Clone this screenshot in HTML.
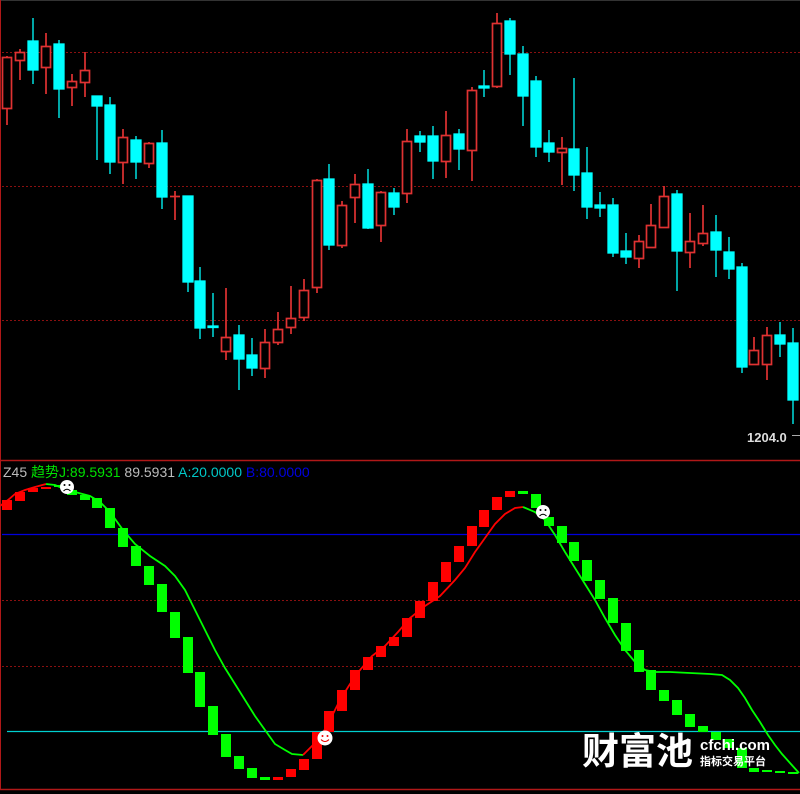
<!DOCTYPE html>
<html><head><meta charset="utf-8"><style>
html,body{margin:0;padding:0;background:#000;}
svg{display:block}
</style></head><body>
<svg width="800" height="794" viewBox="0 0 800 794" xmlns="http://www.w3.org/2000/svg" font-family="Liberation Sans, Noto Sans CJK SC, sans-serif">
<rect width="800" height="794" fill="#000"/>
<line x1="0" y1="0.5" x2="800" y2="0.5" stroke="#333"/>
<line x1="0.5" y1="0" x2="0.5" y2="460" stroke="#b01818"/>
<g stroke="#8a1010" stroke-dasharray="2,2" stroke-width="1">
<line x1="2" y1="52.5" x2="800" y2="52.5"/>
<line x1="2" y1="186.5" x2="800" y2="186.5"/>
<line x1="2" y1="320.5" x2="800" y2="320.5"/>
<line x1="2" y1="600.5" x2="800" y2="600.5"/>
<line x1="2" y1="666.5" x2="800" y2="666.5"/>
</g>
<line x1="0" y1="460.5" x2="800" y2="460.5" stroke="#b01818" stroke-width="1.5"/>
<line x1="0" y1="789.5" x2="800" y2="789.5" stroke="#b01818" stroke-width="1.5"/>
<line x1="0.5" y1="460" x2="0.5" y2="790" stroke="#b01818"/>
<line x1="2" y1="534.5" x2="800" y2="534.5" stroke="#0000dd" stroke-width="1.3"/>
<line x1="7" y1="731.5" x2="800" y2="731.5" stroke="#00d0d0" stroke-width="1.3"/>
<text x="747" y="442" fill="#ddd" font-size="13" font-weight="bold">1204.0</text>
<line x1="792" y1="435.5" x2="800" y2="435.5" stroke="#aaa"/>

<g id="candles" stroke-width="1.7">
<g stroke="#e03232" fill="none">
<line x1="7" y1="56" x2="7" y2="125"/><rect x="2.5" y="57.5" width="9" height="51" fill="#000"/>
<line x1="20" y1="49" x2="20" y2="80"/><rect x="15.5" y="52.5" width="9" height="8" fill="#000"/>
<line x1="46" y1="33" x2="46" y2="94"/><rect x="41.5" y="46.5" width="9" height="21" fill="#000"/>
<line x1="72" y1="74" x2="72" y2="106"/><rect x="67.5" y="81.5" width="9" height="6" fill="#000"/>
<line x1="85" y1="52" x2="85" y2="97"/><rect x="80.5" y="70.5" width="9" height="12" fill="#000"/>
<line x1="123" y1="129" x2="123" y2="184"/><rect x="118.5" y="137.5" width="9" height="25" fill="#000"/>
<line x1="149" y1="142" x2="149" y2="168"/><rect x="144.5" y="143.5" width="9" height="20" fill="#000"/>
<line x1="175" y1="191" x2="175" y2="220"/><line x1="170" y1="196.5" x2="180" y2="196.5"/>
<line x1="226" y1="288" x2="226" y2="360"/><rect x="221.5" y="337.5" width="9" height="14" fill="#000"/>
<line x1="265" y1="329" x2="265" y2="378"/><rect x="260.5" y="342.5" width="9" height="26" fill="#000"/>
<line x1="278" y1="312" x2="278" y2="345"/><rect x="273.5" y="329.5" width="9" height="13" fill="#000"/>
<line x1="291" y1="286" x2="291" y2="334"/><rect x="286.5" y="318.5" width="9" height="9" fill="#000"/>
<line x1="304" y1="279" x2="304" y2="321"/><rect x="299.5" y="290.5" width="9" height="27" fill="#000"/>
<line x1="317" y1="179" x2="317" y2="293"/><rect x="312.5" y="180.5" width="9" height="107" fill="#000"/>
<line x1="342" y1="201" x2="342" y2="248"/><rect x="337.5" y="205.5" width="9" height="40" fill="#000"/>
<line x1="355" y1="174" x2="355" y2="223"/><rect x="350.5" y="184.5" width="9" height="13" fill="#000"/>
<line x1="381" y1="191" x2="381" y2="242"/><rect x="376.5" y="192.5" width="9" height="33" fill="#000"/>
<line x1="407" y1="129" x2="407" y2="203"/><rect x="402.5" y="141.5" width="9" height="52" fill="#000"/>
<line x1="446" y1="111" x2="446" y2="178"/><rect x="441.5" y="135.5" width="9" height="26" fill="#000"/>
<line x1="472" y1="87" x2="472" y2="181"/><rect x="467.5" y="90.5" width="9" height="60" fill="#000"/>
<line x1="497" y1="13" x2="497" y2="88"/><rect x="492.5" y="23.5" width="9" height="63" fill="#000"/>
<line x1="562" y1="137" x2="562" y2="185"/><rect x="557.5" y="148.5" width="9" height="4" fill="#000"/>
<line x1="639" y1="235" x2="639" y2="268"/><rect x="634.5" y="241.5" width="9" height="17" fill="#000"/>
<line x1="651" y1="204" x2="651" y2="247"/><rect x="646.5" y="225.5" width="9" height="22" fill="#000"/>
<line x1="664" y1="186" x2="664" y2="228"/><rect x="659.5" y="196.5" width="9" height="31" fill="#000"/>
<line x1="690" y1="213" x2="690" y2="268"/><rect x="685.5" y="241.5" width="9" height="11" fill="#000"/>
<line x1="703" y1="205" x2="703" y2="246"/><rect x="698.5" y="233.5" width="9" height="10" fill="#000"/>
<line x1="754" y1="337" x2="754" y2="365"/><rect x="749.5" y="350.5" width="9" height="14" fill="#000"/>
<line x1="767" y1="327" x2="767" y2="380"/><rect x="762.5" y="335.5" width="9" height="29" fill="#000"/>
</g>
<g stroke="#00ffff" fill="#00ffff" stroke-width="1.3">
<line x1="33" y1="18" x2="33" y2="84"/><rect x="28" y="41" width="10" height="29"/>
<line x1="59" y1="40" x2="59" y2="118"/><rect x="54" y="44" width="10" height="45"/>
<line x1="97" y1="96" x2="97" y2="160"/><rect x="92" y="96" width="10" height="10"/>
<line x1="110" y1="97" x2="110" y2="174"/><rect x="105" y="105" width="10" height="57"/>
<line x1="136" y1="136" x2="136" y2="179"/><rect x="131" y="140" width="10" height="22"/>
<line x1="162" y1="130" x2="162" y2="209"/><rect x="157" y="143" width="10" height="54"/>
<line x1="188" y1="196" x2="188" y2="292"/><rect x="183" y="196" width="10" height="86"/>
<line x1="200" y1="267" x2="200" y2="339"/><rect x="195" y="281" width="10" height="47"/>
<line x1="213" y1="293" x2="213" y2="337"/><rect x="208" y="326" width="10" height="1.5"/>
<line x1="239" y1="325" x2="239" y2="390"/><rect x="234" y="335" width="10" height="24"/>
<line x1="252" y1="338" x2="252" y2="376"/><rect x="247" y="355" width="10" height="13"/>
<line x1="329" y1="164" x2="329" y2="250"/><rect x="324" y="179" width="10" height="66"/>
<line x1="368" y1="169" x2="368" y2="229"/><rect x="363" y="184" width="10" height="44"/>
<line x1="394" y1="188" x2="394" y2="215"/><rect x="389" y="193" width="10" height="14"/>
<line x1="420" y1="131" x2="420" y2="152"/><rect x="415" y="136" width="10" height="6"/>
<line x1="433" y1="126" x2="433" y2="179"/><rect x="428" y="136" width="10" height="25"/>
<line x1="459" y1="129" x2="459" y2="170"/><rect x="454" y="134" width="10" height="15"/>
<line x1="484" y1="70" x2="484" y2="97"/><rect x="479" y="86" width="10" height="2"/>
<line x1="510" y1="18" x2="510" y2="75"/><rect x="505" y="21" width="10" height="33"/>
<line x1="523" y1="46" x2="523" y2="126"/><rect x="518" y="54" width="10" height="42"/>
<line x1="536" y1="76" x2="536" y2="157"/><rect x="531" y="81" width="10" height="66"/>
<line x1="549" y1="130" x2="549" y2="162"/><rect x="544" y="143" width="10" height="9"/>
<line x1="574" y1="78" x2="574" y2="191"/><rect x="569" y="149" width="10" height="26"/>
<line x1="587" y1="147" x2="587" y2="219"/><rect x="582" y="173" width="10" height="34"/>
<line x1="600" y1="192" x2="600" y2="217"/><rect x="595" y="205" width="10" height="3"/>
<line x1="613" y1="198" x2="613" y2="257"/><rect x="608" y="205" width="10" height="48"/>
<line x1="626" y1="233" x2="626" y2="264"/><rect x="621" y="251" width="10" height="6"/>
<line x1="677" y1="190" x2="677" y2="291"/><rect x="672" y="194" width="10" height="57"/>
<line x1="716" y1="215" x2="716" y2="277"/><rect x="711" y="232" width="10" height="18"/>
<line x1="729" y1="237" x2="729" y2="279"/><rect x="724" y="252" width="10" height="17"/>
<line x1="742" y1="263" x2="742" y2="373"/><rect x="737" y="267" width="10" height="100"/>
<line x1="780" y1="322" x2="780" y2="357"/><rect x="775" y="335" width="10" height="9"/>
<line x1="793" y1="328" x2="793" y2="424"/><rect x="788" y="343" width="10" height="57"/>
</g>
</g>

<g fill="#ff0000">
<rect x="2" y="500" width="10" height="10"/>
<rect x="15" y="492" width="10" height="9"/>
<rect x="28" y="488" width="10" height="4"/>
<rect x="41" y="487" width="10" height="2"/>
<rect x="273" y="777" width="10" height="3"/>
<rect x="286" y="769" width="10" height="8"/>
<rect x="299" y="759" width="10" height="11"/>
<rect x="312" y="732" width="10" height="27"/>
<rect x="324" y="711" width="10" height="21"/>
<rect x="337" y="690" width="10" height="21"/>
<rect x="350" y="670" width="10" height="20"/>
<rect x="363" y="657" width="10" height="13"/>
<rect x="376" y="646" width="10" height="11"/>
<rect x="389" y="637" width="10" height="9"/>
<rect x="402" y="618" width="10" height="19"/>
<rect x="415" y="601" width="10" height="17"/>
<rect x="428" y="582" width="10" height="19"/>
<rect x="441" y="562" width="10" height="20"/>
<rect x="454" y="546" width="10" height="16"/>
<rect x="467" y="526" width="10" height="20"/>
<rect x="479" y="510" width="10" height="17"/>
<rect x="492" y="497" width="10" height="13"/>
<rect x="505" y="491" width="10" height="6"/>
</g>
<g fill="#00ff00">
<rect x="54" y="485" width="10" height="2"/>
<rect x="67" y="490" width="10" height="5"/>
<rect x="80" y="495" width="10" height="5"/>
<rect x="92" y="498" width="10" height="10"/>
<rect x="105" y="508" width="10" height="20"/>
<rect x="118" y="528" width="10" height="19"/>
<rect x="131" y="546" width="10" height="20"/>
<rect x="144" y="566" width="10" height="19"/>
<rect x="157" y="584" width="10" height="28"/>
<rect x="170" y="612" width="10" height="26"/>
<rect x="183" y="637" width="10" height="36"/>
<rect x="195" y="672" width="10" height="35"/>
<rect x="208" y="706" width="10" height="29"/>
<rect x="221" y="734" width="10" height="23"/>
<rect x="234" y="756" width="10" height="13"/>
<rect x="247" y="768" width="10" height="10"/>
<rect x="260" y="777" width="10" height="3"/>
<rect x="518" y="491" width="10" height="3"/>
<rect x="531" y="494" width="10" height="14"/>
<rect x="544" y="517" width="10" height="9"/>
<rect x="557" y="526" width="10" height="17"/>
<rect x="569" y="542" width="10" height="19"/>
<rect x="582" y="560" width="10" height="21"/>
<rect x="595" y="580" width="10" height="19"/>
<rect x="608" y="598" width="10" height="25"/>
<rect x="621" y="623" width="10" height="28"/>
<rect x="634" y="650" width="10" height="22"/>
<rect x="646" y="670" width="10" height="20"/>
<rect x="659" y="690" width="10" height="11"/>
<rect x="672" y="700" width="10" height="15"/>
<rect x="685" y="714" width="10" height="13"/>
<rect x="698" y="726" width="10" height="6"/>
<rect x="711" y="732" width="10" height="8"/>
<rect x="724" y="739" width="10" height="9"/>
<rect x="737" y="748" width="10" height="20"/>
<rect x="749" y="768" width="10" height="4"/>
<rect x="762" y="770" width="10" height="2"/>
<rect x="775" y="771" width="10" height="2"/>
<rect x="788" y="772" width="10" height="2"/>
</g>
<polyline fill="none" stroke="#ff0000" stroke-width="1.8" points="0,506 8,500 15,494 25,490 35,487 46,484"/>
<polyline fill="none" stroke="#00ff00" stroke-width="1.8" points="46,484 55,485 62,488 75,492 90,496 100,502 110,512 123,530 135,544 150,556 165,566 175,576 185,590 195,610 205,630 215,650 225,668 235,684 245,700 255,716 265,730 275,744 285,750 292,754 303,755"/>
<polyline fill="none" stroke="#ff0000" stroke-width="1.8" points="303,755 312,746 320,738 330,720 340,700 350,684 360,670 372,656 385,646 398,632 410,618 425,606 440,596 455,580 465,568 475,552 485,538 495,524 505,514 515,508 523,507"/>
<polyline fill="none" stroke="#00ff00" stroke-width="1.8" points="523,507 535,512 545,520 555,535 565,552 575,568 585,584 595,600 605,618 615,635 625,650 635,662 645,670 655,672 670,672 690,673 710,674 722,675 730,680 738,688 745,698 752,710 760,722 768,735 775,745 782,754 790,763 799,773"/>
<g>
<circle cx="67" cy="487" r="7" fill="#fff"/>
<circle cx="64.5" cy="485" r="1" fill="#000"/><circle cx="69.5" cy="485" r="1" fill="#000"/>
<path d="M63.5 491 Q67 487.5 70.5 491" stroke="#000" fill="none" stroke-width="1"/>
<circle cx="543" cy="512" r="7" fill="#fff"/>
<circle cx="540.5" cy="510" r="1" fill="#000"/><circle cx="545.5" cy="510" r="1" fill="#000"/>
<path d="M539.5 516 Q543 512.5 546.5 516" stroke="#000" fill="none" stroke-width="1"/>
<circle cx="325" cy="738" r="7.5" fill="#fff"/>
<circle cx="322.5" cy="736" r="1" fill="#e00" /><circle cx="327.5" cy="736" r="1" fill="#e00"/>
<path d="M321 739.5 Q325 743.5 329 739.5" stroke="#e00" fill="none" stroke-width="1"/>
</g>
<text x="3" y="477" font-size="14" fill="#bbb">Z45 <tspan fill="#00e000">趋势J:89.5931</tspan> 89.5931 <tspan fill="#00c8c8">A:20.0000</tspan> <tspan fill="#0000e0">B:80.0000</tspan></text>
<text x="582" y="764" font-size="37" font-weight="bold" fill="#fff" font-family="Noto Sans CJK SC, sans-serif">财富池</text>
<text x="700" y="750" font-size="15" font-weight="bold" fill="#fff">cfchi.com</text>
<text x="700" y="765" font-size="11" font-weight="bold" fill="#fff" font-family="Noto Sans CJK SC, sans-serif">指标交易平台</text>
</svg>
</body></html>
